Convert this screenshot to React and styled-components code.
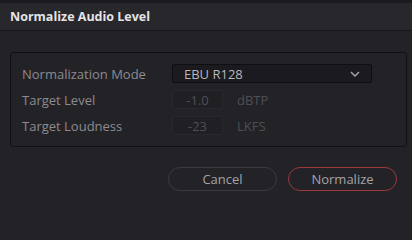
import React from "react";
import styled, { createGlobalStyle } from "styled-components";

const Global = createGlobalStyle`
  html, body { margin: 0; padding: 0; background: #232227; }
  body { font-family: "Open Sans", "Noto Sans", sans-serif; }
`;

const Dialog = styled.div`
  width: 412px;
  height: 206px;
  background: #232227;
  display: flex;
  flex-direction: column;
  border-top: 3px solid #1b1a1e;
  box-sizing: border-box;
`;

const TitleBar = styled.div`
  height: 27px;
  background: #28272c;
  border-bottom: 1px solid #18171b;
  display: flex;
  align-items: center;
  padding-left: 10px;
  font-weight: 700;
  font-size: 12.5px;
  color: #e4e4e6;
`;

const Body = styled.div`
  flex: 1;
  padding: 21px 5px 0 10px;
  display: flex;
  flex-direction: column;
`;

const Group = styled.div`
  border: 1px solid #111014;
  border-radius: 3px;
  padding: 11px 12px 11px 11px;
  display: flex;
  flex-direction: column;
  gap: 7px;
`;

const Row = styled.div`
  display: grid;
  grid-template-columns: 150px auto 1fr;
  align-items: center;
  height: 19px;
`;

const Label = styled.span`
  font-size: 13px;
  color: #8c8b90;
`;

const Select = styled.div`
  grid-column: 2 / 4;
  width: 200px;
  height: 19px;
  box-sizing: border-box;
  background: #1b1a1e;
  border: 1px solid #0f0f12;
  border-radius: 2px;
  display: flex;
  align-items: center;
  justify-content: space-between;
  padding: 0 11px 0 11px;
  font-size: 13px;
  color: #b8b7bc;
`;

const Field = styled.div`
  width: 51px;
  height: 19px;
  box-sizing: border-box;
  background: #201f23;
  border: 1px solid #29282d;
  border-radius: 2px;
  display: flex;
  align-items: center;
  justify-content: center;
  font-size: 13px;
  color: #4f4e53;
`;

const Unit = styled.span`
  font-size: 13px;
  color: #4f4e53;
  margin-left: 14px;
`;

const Buttons = styled.div`
  display: flex;
  justify-content: flex-end;
  gap: 11px;
  padding: 20px 10px 0 0;
`;

const Button = styled.button`
  width: 109px;
  height: 24px;
  border-radius: 12px;
  background: transparent;
  border: 1px solid ${(p) => (p.$primary ? "#9b3a3a" : "#3b3a3f")};
  color: #a3a2a7;
  font-family: "Open Sans", "Noto Sans", sans-serif;
  font-size: 13px;
  padding: 0;
  display: flex;
  align-items: center;
  justify-content: center;
`;

const Chevron = () => (
  <svg width="10" height="6" viewBox="0 0 10 6">
    <path d="M1 1 L5 5 L9 1" fill="none" stroke="#a9a8ad" strokeWidth="1.4" />
  </svg>
);

export default function App() {
  return (
    <>
      <Global />
      <Dialog>
        <TitleBar>Normalize Audio Level</TitleBar>
        <Body>
          <Group>
            <Row>
              <Label>Normalization Mode</Label>
              <Select>
                <span>EBU R128</span>
                <Chevron />
              </Select>
            </Row>
            <Row>
              <Label>Target Level</Label>
              <Field>-1.0</Field>
              <Unit>dBTP</Unit>
            </Row>
            <Row>
              <Label>Target Loudness</Label>
              <Field>-23</Field>
              <Unit>LKFS</Unit>
            </Row>
          </Group>
          <Buttons>
            <Button>Cancel</Button>
            <Button $primary>Normalize</Button>
          </Buttons>
        </Body>
      </Dialog>
    </>
  );
}
